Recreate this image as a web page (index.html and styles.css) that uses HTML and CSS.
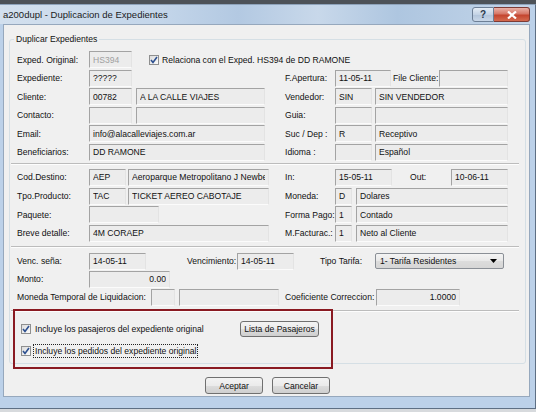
FILE: index.html
```html
<!DOCTYPE html>
<html lang="es">
<head>
<meta charset="utf-8">
<title>a200dupl - Duplicacion de Expedientes</title>
<link rel="stylesheet" href="styles.css">
</head>
<body>
<div class="win">
  <div class="titlebar">
    <span class="title-text">a200dupl - Duplicacion de Expedientes</span>
    <div class="caption">
      <span class="cbtn help">?</span>
      <span class="cbtn close">
        <svg width="10" height="8" viewBox="0 0 10 8"><path d="M1 0.5 L9 7.5 M9 0.5 L1 7.5" stroke="#fff" stroke-width="2.2"/></svg>
      </span>
    </div>
  </div>

  <div class="client">
    <fieldset class="group">
      <legend>Duplicar Expedientes</legend>

      <!-- datos del expediente -->
      <div class="rows">
        <div class="row">
          <span class="lbl w72">Exped. Original:</span>
          <input class="fld dis w43" value="HS394" readonly>
          <span class="chk relchk"><svg width="8" height="8" viewBox="0 0 8 8"><path d="M1 4 L3 6.5 L7 1" fill="none" stroke="#2c4f8f" stroke-width="1.6"/></svg></span>
          <span class="chk-text">Relaciona con el Exped. HS394 de DD RAMONE</span>
        </div>
        <div class="row">
          <div class="lcol">
            <span class="lbl w72">Expediente:</span>
            <input class="fld w43" value="?????" readonly>
          </div>
          <div class="rcol">
            <span class="lbl w50">F.Apertura:</span>
            <input class="fld w56" value="11-05-11" readonly>
            <span class="lbl w46 ml2">File Cliente:</span>
            <input class="fld w69" value="" readonly>
          </div>
        </div>
        <div class="row">
          <div class="lcol">
            <span class="lbl w72">Cliente:</span>
            <input class="fld w43" value="00782" readonly>
            <input class="fld w129 ml4" value="A LA CALLE VIAJES" readonly>
          </div>
          <div class="rcol">
            <span class="lbl w50">Vendedor:</span>
            <input class="fld w37" value="SIN" readonly>
            <input class="fld w133 ml3" value="SIN VENDEDOR" readonly>
          </div>
        </div>
        <div class="row">
          <div class="lcol">
            <span class="lbl w72">Contacto:</span>
            <input class="fld w43" value="" readonly>
            <input class="fld w129 ml4" value="" readonly>
          </div>
          <div class="rcol">
            <span class="lbl w50">Guia:</span>
            <input class="fld w37" value="" readonly>
            <input class="fld w133 ml3" value="" readonly>
          </div>
        </div>
        <div class="row">
          <div class="lcol">
            <span class="lbl w72">Email:</span>
            <input class="fld w176" value="info@alacalleviajes.com.ar" readonly>
          </div>
          <div class="rcol">
            <span class="lbl w50">Suc / Dep :</span>
            <input class="fld w37" value="R" readonly>
            <input class="fld w133 ml3" value="Receptivo" readonly>
          </div>
        </div>
        <div class="row">
          <div class="lcol">
            <span class="lbl w72">Beneficiarios:</span>
            <input class="fld w176" value="DD RAMONE" readonly>
          </div>
          <div class="rcol">
            <span class="lbl w50">Idioma :</span>
            <input class="fld w37" value="" readonly>
            <input class="fld w133 ml3" value="Español" readonly>
          </div>
        </div>
      </div>

      <div class="sep"></div>

      <!-- destino / producto -->
      <div class="rows">
        <div class="row">
          <div class="lcol">
            <span class="lbl w72">Cod.Destino:</span>
            <input class="fld w37" value="AEP" readonly>
            <input class="fld w141 ml2" value="Aeroparque Metropolitano J Newbery" readonly>
          </div>
          <div class="rcol">
            <span class="lbl w50">In:</span>
            <input class="fld w57" value="15-05-11" readonly>
            <span class="lbl w41 ml18">Out:</span>
            <input class="fld w57" value="10-06-11" readonly>
          </div>
        </div>
        <div class="row">
          <div class="lcol">
            <span class="lbl w72">Tpo.Producto:</span>
            <input class="fld w37" value="TAC" readonly>
            <input class="fld w141 ml2" value="TICKET AEREO CABOTAJE" readonly>
          </div>
          <div class="rcol">
            <span class="lbl w50">Moneda:</span>
            <input class="fld w17" value="D" readonly>
            <input class="fld w152 ml4" value="Dolares" readonly>
          </div>
        </div>
        <div class="row">
          <div class="lcol">
            <span class="lbl w72">Paquete:</span>
            <input class="fld w70" value="" readonly>
          </div>
          <div class="rcol">
            <span class="lbl w50">Forma Pago:</span>
            <input class="fld w17" value="1" readonly>
            <input class="fld w152 ml4" value="Contado" readonly>
          </div>
        </div>
        <div class="row">
          <div class="lcol">
            <span class="lbl w72">Breve detalle:</span>
            <input class="fld w180" value="4M CORAEP" readonly>
          </div>
          <div class="rcol">
            <span class="lbl w50">M.Facturac.:</span>
            <input class="fld w17" value="1" readonly>
            <input class="fld w152 ml4" value="Neto al Cliente" readonly>
          </div>
        </div>
      </div>

      <div class="sep sep2"></div>

      <!-- vencimientos -->
      <div class="rows rows3">
        <div class="row">
          <span class="lbl w72">Venc. seña:</span>
          <input class="fld w57" value="14-05-11" readonly>
          <span class="lbl w50 ml41">Vencimiento:</span>
          <input class="fld w57" value="14-05-11" readonly>
          <span class="lbl w55 ml26">Tipo Tarifa:</span>
          <div class="combo w129">
            <span>1- Tarifa Residentes</span>
            <svg width="7" height="4" viewBox="0 0 7 4"><path d="M0 0 H7 L3.5 4 Z" fill="#000"/></svg>
          </div>
        </div>
        <div class="row">
          <span class="lbl w72">Monto:</span>
          <input class="fld num w81" value="0.00" readonly>
        </div>
        <div class="row">
          <span class="lbl w134">Moneda Temporal de Liquidacion:</span>
          <input class="fld w24" value="" readonly>
          <input class="fld w100 ml4" value="" readonly>
          <span class="lbl w91 ml6">Coeficiente Correccion:</span>
          <input class="fld num w84" value="1.0000" readonly>
        </div>
      </div>

      <div class="sep sep3"></div>

      <!-- opciones -->
      <div class="opts">
        <div class="opt-row">
          <span class="chk"><svg width="8" height="8" viewBox="0 0 8 8"><path d="M1 4 L3 6.5 L7 1" fill="none" stroke="#2c4f8f" stroke-width="1.6"/></svg></span>
          <span class="opt-text">Incluye los pasajeros del expediente original</span>
          <button class="btn btn-pax">Lista de Pasajeros</button>
        </div>
        <div class="opt-row">
          <span class="chk"><svg width="8" height="8" viewBox="0 0 8 8"><path d="M1 4 L3 6.5 L7 1" fill="none" stroke="#2c4f8f" stroke-width="1.6"/></svg></span>
          <span class="opt-text focus">Incluye los pedidos del expediente original</span>
        </div>
      </div>
    </fieldset>

    <div class="actions">
      <button class="btn">Aceptar</button>
      <button class="btn">Cancelar</button>
    </div>

    <div class="highlight"></div>
  </div>
</div>
</body>
</html>
```

FILE: styles.css
```css
html, body { margin: 0; padding: 0; }

body {
  width: 536px;
  height: 412px;
  overflow: hidden;
  background: linear-gradient(#4d5258 0, #4d5258 4px, #d7dadd 4px);
  font-family: "Liberation Sans", Arial, sans-serif;
  font-size: 8.6px;
  color: #111;
}

.win {
  position: relative;
  width: 530px;
  height: 398px;
  margin-top: 4px;
  padding: 0 5px 5px 0;
  background: #bcd1e9;
  border: 1px solid #5e6f84;
  border-top-color: #8ea3bb;
  border-left: none;
}

/* title bar */
.titlebar {
  height: 19px;
  display: flex;
  align-items: center;
  padding-left: 3px;
  background: linear-gradient(90deg, #d3e0ee 0%, #c4d6ea 30%, #b3c9e2 45%, #c8d8ea 60%, #aec6e0 75%, #c3d5e9 100%);
}

.title-text {
  font-size: 9.5px;
  color: #1b1b1b;
}

.caption {
  margin-left: auto;
  display: flex;
  align-self: flex-start;
  margin-top: 2px;
}

.cbtn {
  height: 13px;
  display: flex;
  align-items: center;
  justify-content: center;
  border: 1px solid #6d7f96;
}

.help {
  width: 20px;
  border-radius: 3px 0 0 3px;
  background: linear-gradient(#e4ecf5, #c4d3e5 50%, #b2c4da 51%, #c9d7e8);
  font-size: 10px;
  color: #2b3a4d;
  font-weight: bold;
}

.close {
  width: 35px;
  border-left: none;
  border-color: #7d3b35;
  border-radius: 0 3px 3px 0;
  background: linear-gradient(#eab1a7, #d67767 45%, #c4452f 55%, #d46a4f);
}

/* client area */
.client {
  position: relative;
  margin-left: 3px;
  height: 373px;
  background: #f0f0f0;
  border: 1px solid #96a8bd;
  padding-top: 9px;
  box-sizing: border-box;
}

.group {
  margin: 0 3px 0 5px;
  padding: 7px 7px 0 7px;
  height: 330px;
  box-sizing: border-box;
  border: 1px solid #d5dfe5;
  border-radius: 3px;
}

.group legend {
  padding: 0 2px;
  margin-left: -3px;
  font-size: 8.6px;
}

.rows {
  display: flex;
  flex-direction: column;
  gap: 1.6px;
}

.rows3 { gap: 1px; }

.row {
  display: flex;
  align-items: center;
  height: 17px;
}

.lcol {
  display: flex;
  align-items: center;
  width: 268px;
}

.rcol {
  display: flex;
  align-items: center;
}

.lbl { white-space: nowrap; }

.fld {
  box-sizing: border-box;
  height: 17px;
  padding: 0 3px;
  margin: 0;
  font: inherit;
  color: #111;
  background: #ececec;
  border: 1px solid;
  border-color: #a3a3a3 #e3e3e3 #fbfbfb #a3a3a3;
  outline: none;
}

.fld.dis { color: #a0a0a0; }
.fld.num { text-align: right; padding-right: 3px; }

.w17 { width: 17px; }
.w24 { width: 24px; }
.w37 { width: 37px; }
.w41 { width: 41px; }
.w43 { width: 43px; }
.w46 { width: 46px; }
.w50 { width: 50px; }
.w55 { width: 55px; }
.w56 { width: 56px; }
.w57 { width: 57px; }
.w69 { width: 69px; }
.w70 { width: 70px; }
.w72 { width: 72px; }
.w81 { width: 81px; }
.w84 { width: 84px; }
.w91 { width: 91px; }
.w100 { width: 100px; }
.w129 { width: 129px; }
.w133 { width: 133px; }
.w134 { width: 134px; }
.w141 { width: 141px; }
.w152 { width: 152px; }
.w176 { width: 176px; }
.w180 { width: 180px; }

.ml2 { margin-left: 2px; }
.ml3 { margin-left: 3px; }
.ml4 { margin-left: 4px; }
.ml6 { margin-left: 6px; }
.ml18 { margin-left: 18px; }
.ml26 { margin-left: 26px; }
.ml41 { margin-left: 41px; }

.chk {
  box-sizing: border-box;
  width: 10px;
  height: 10px;
  display: inline-flex;
  align-items: center;
  justify-content: center;
  border: 1px solid #8e8f8f;
  background: linear-gradient(135deg, #dcdcdc, #fbfbfb);
}

.relchk { margin-left: 17px; }
.chk-text { margin-left: 3px; white-space: nowrap; }

.sep {
  margin: 2px -1px 4px -6px;
  border-top: 1px solid #bcbcbc;
  border-bottom: 1px solid #fdfdfd;
}

.sep2 { margin-top: 4px; margin-bottom: 5px; }
.sep3 { margin-top: 4px; margin-bottom: 0; }

.combo {
  box-sizing: border-box;
  height: 16px;
  display: flex;
  align-items: center;
  justify-content: space-between;
  padding: 0 6px 0 4px;
  border: 1px solid #8a8f96;
  border-radius: 2px;
  background: linear-gradient(#f4f4f4, #e8e8e8 50%, #dcdcdc 51%, #d6d6d6);
}

/* options */
.opts {
  padding: 7px 0 0 4px;
}

.opt-row {
  display: flex;
  align-items: center;
  height: 20px;
}

.opt-row + .opt-row { margin-top: 2px; }

.opt-text { margin-left: 4px; white-space: nowrap; }

.opt-text.focus {
  margin-left: 2px;
  padding: 1px 1px;
  border: 1px dotted #222;
}

.btn-pax {
  margin-left: auto;
  margin-right: 199px;
  width: 79px;
}

.btn {
  box-sizing: border-box;
  height: 16px;
  padding: 0;
  font: inherit;
  color: #111;
  border: 1px solid #707070;
  border-radius: 3px;
  background: linear-gradient(#f3f3f3, #ebebeb 50%, #dddddd 51%, #cfcfcf);
}

.actions {
  display: flex;
  gap: 9px;
  padding: 13px 0 0 201px;
}

.actions .btn { width: 58px; height: 17px; }

/* annotation drawn over the screenshot */
.highlight {
  position: absolute;
  left: 9px;
  top: 284px;
  width: 320px;
  height: 60px;
  box-sizing: border-box;
  border: 2px solid #8a1a22;
}
```
